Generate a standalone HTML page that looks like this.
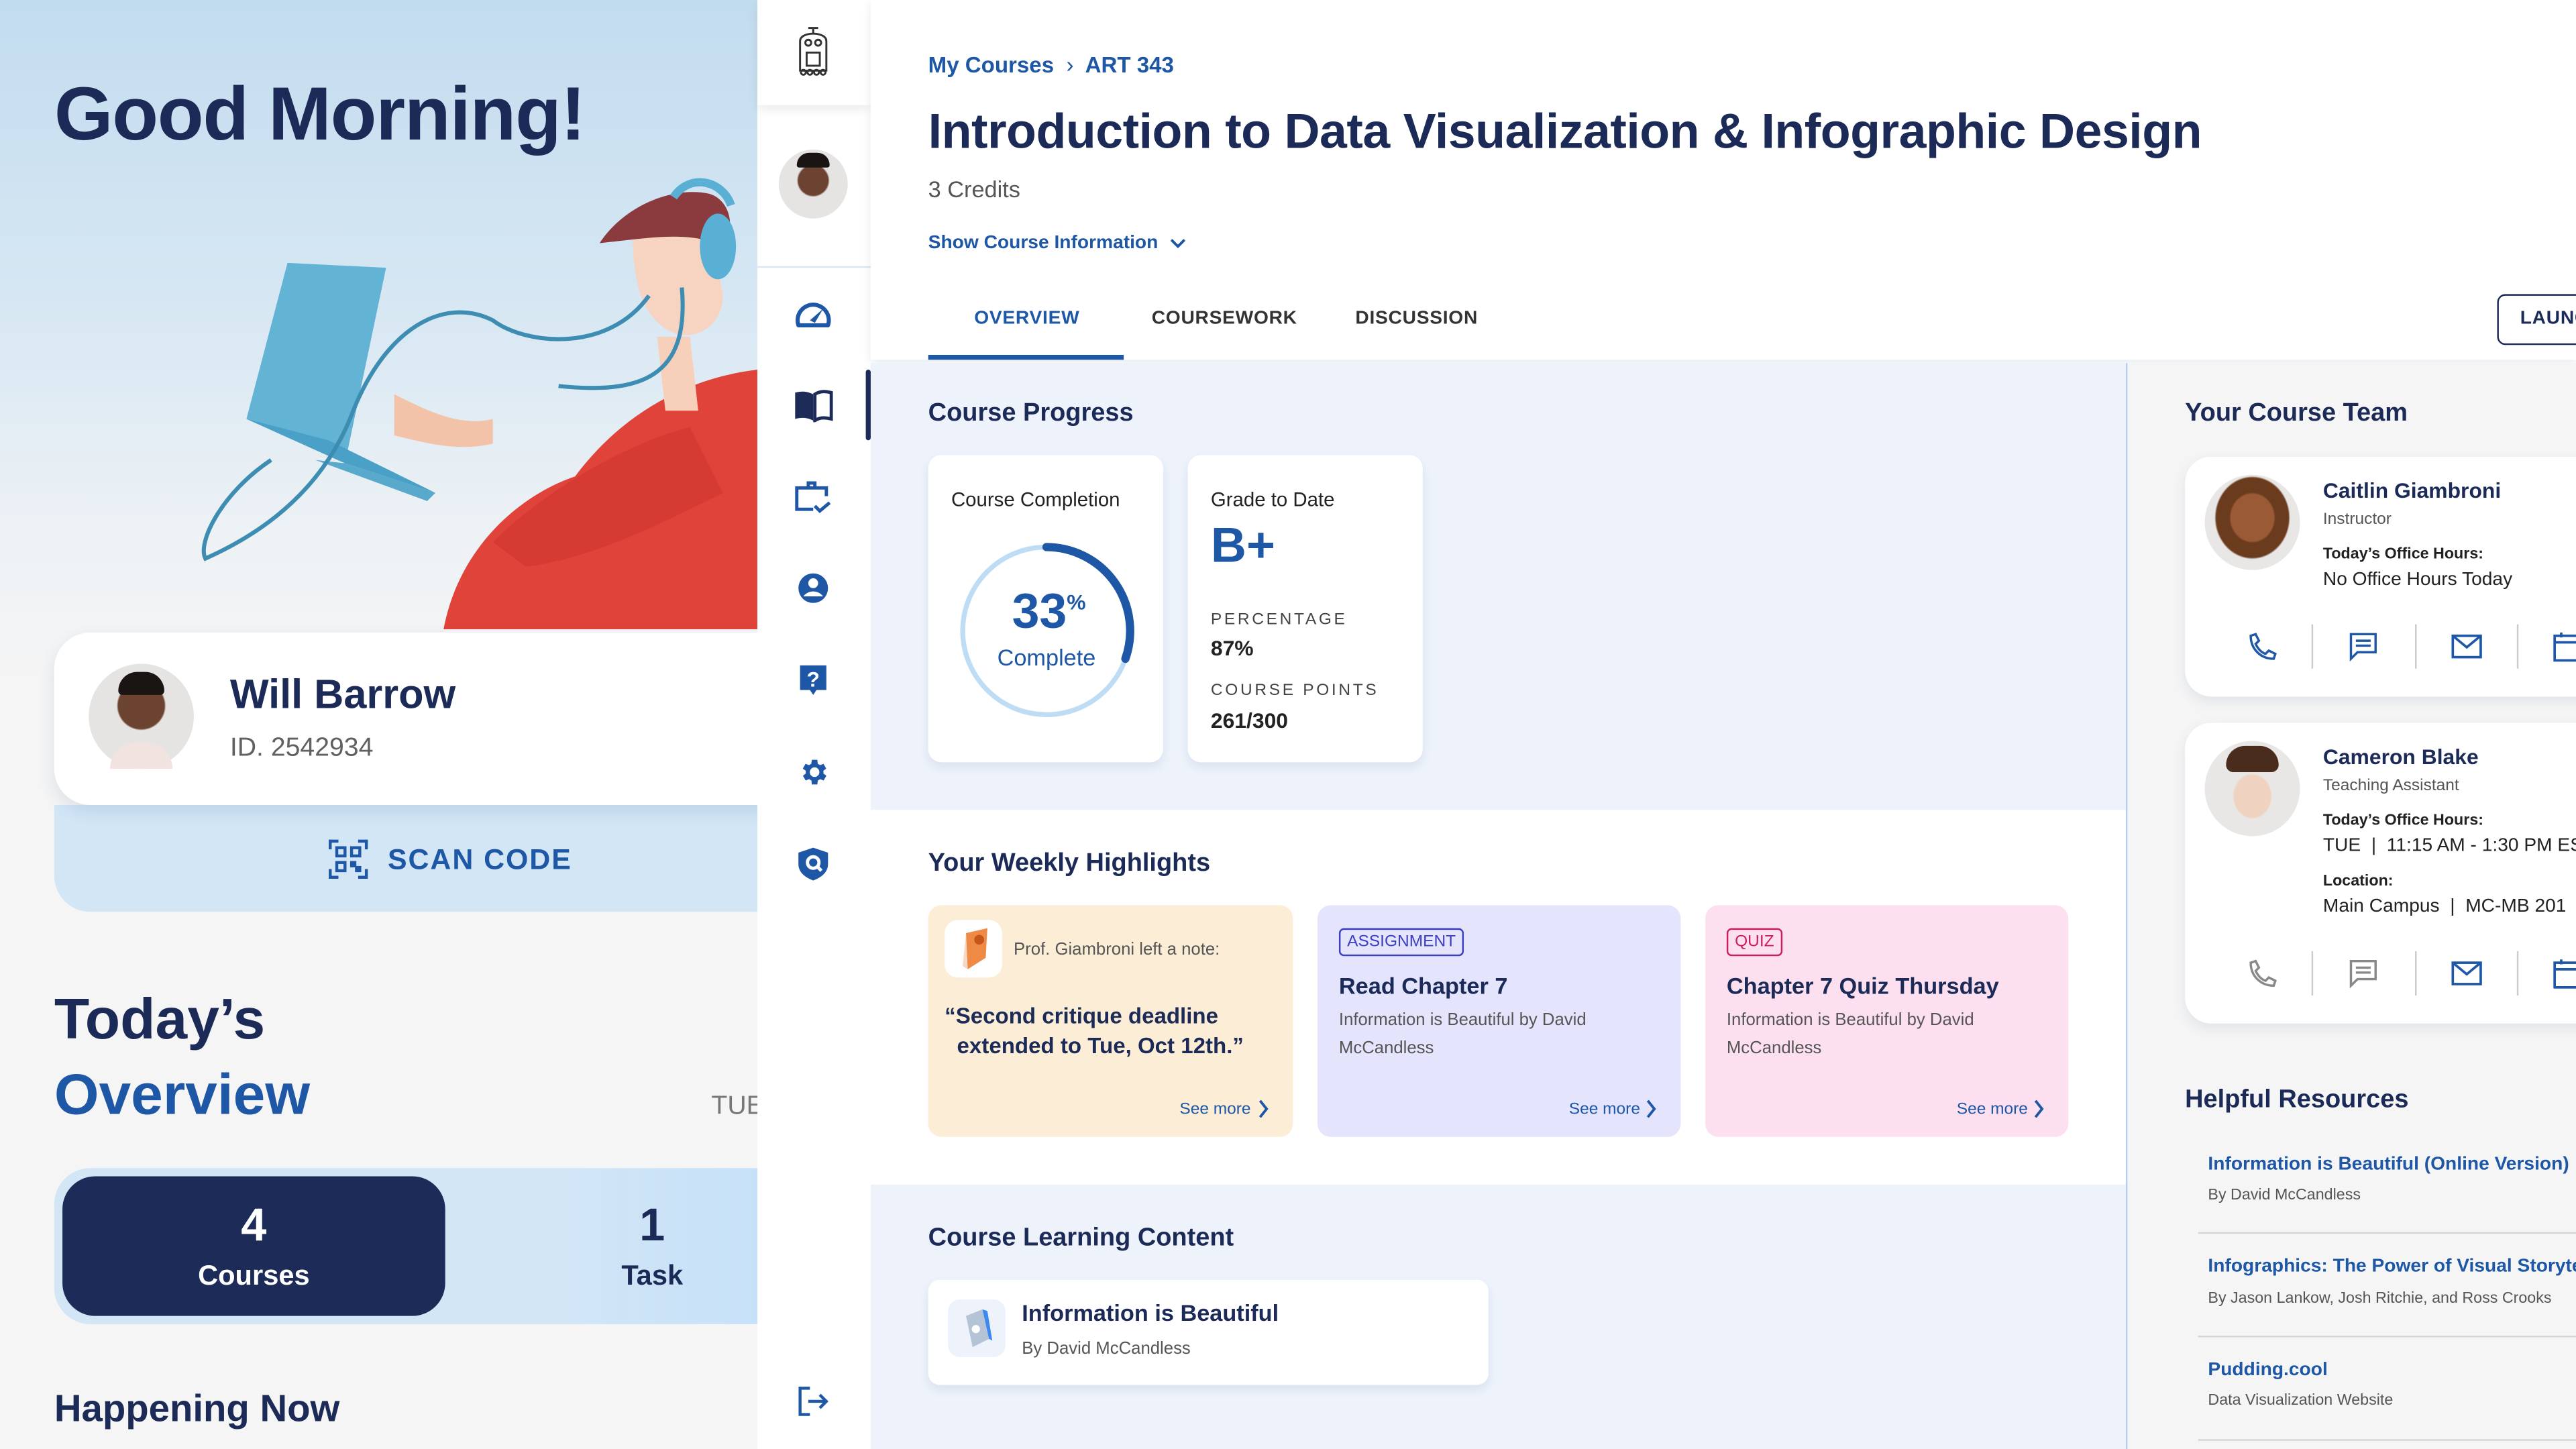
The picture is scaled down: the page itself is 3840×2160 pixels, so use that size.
<!DOCTYPE html>
<html><head><meta charset="utf-8">
<style>
html,body{margin:0;padding:0;width:3840px;height:2160px;overflow:hidden;background:#fff}
#s{position:absolute;left:0;top:0;width:1568px;height:882px;transform:scale(2.44898);transform-origin:0 0;font-family:"Liberation Sans",Arial,sans-serif;overflow:hidden}
.a{position:absolute;white-space:nowrap}
.b{font-weight:bold}
.dk{color:#1b2a57}
.bl{color:#1d57a5}
.gr{color:#555}
</style></head><body><div id="s">

<!-- LEFT PANEL -->
<div class="a" style="left:0;top:0;width:461px;height:882px;background:linear-gradient(180deg,#c2dcef 0%,#d6e7f3 180px,#eef2f5 330px,#f5f5f5 420px,#f5f5f5 100%)"></div>
<div class="a b dk" style="left:33px;top:42px;font-size:46px;letter-spacing:-0.5px">Good Morning!</div>
<!-- illustration -->
<svg class="a" style="left:110px;top:100px" width="351" height="284" viewBox="110 100 351 284">
 <path d="M270 383 C280 330 320 300 350 290 C380 250 420 230 461 225 L461 383 Z" fill="#e0433a"/>
 <path d="M300 330 C330 300 380 270 420 260 L440 300 C400 320 360 340 320 345 Z" fill="#d53a33"/>
 <path d="M240 240 C260 250 280 260 300 255 L300 270 C280 275 260 270 240 265 Z" fill="#f2c3a8"/>
 <path d="M400 205 L420 205 L425 250 L405 250 Z" fill="#f7d0bb"/>
 <path d="M385 140 C385 125 410 115 430 120 L440 180 C440 200 420 210 405 200 C390 190 385 170 385 140 Z" fill="#f7d4c2"/>
 <path d="M365 148 C380 125 410 113 432 118 C445 122 448 140 440 150 C420 140 395 145 365 148 Z" fill="#8b3b3e"/>
 <ellipse cx="437" cy="150" rx="11" ry="20" fill="#5ab0d4"/>
 <path d="M410 120 C420 105 440 110 445 125" stroke="#5ab0d4" stroke-width="5" fill="none"/>
 <path d="M175 160 L235 163 L210 282 L150 255 Z" fill="#62b3d4"/>
 <path d="M150 255 L210 282 L265 300 L200 268 Z" fill="#4aa0c6"/>
 <path d="M210 282 L265 300 L260 305 L192 280 Z" fill="#58a9cc"/>
 <path d="M395 180 C370 215 320 210 300 195 C270 180 235 200 215 250 C200 290 170 320 125 340 C120 330 135 300 165 280" stroke="#3d8db3" stroke-width="2.5" fill="none"/>
 <path d="M415 175 C420 230 390 240 340 235" stroke="#3d8db3" stroke-width="2.5" fill="none"/>
</svg>
<!-- profile card -->
<div class="a" style="left:33px;top:490px;width:440px;height:65px;background:#d2e6f6;border-radius:0 0 0 22px"></div>
<div class="a" style="left:33px;top:385px;width:440px;height:105px;background:#fff;border-radius:22px 0 0 22px;box-shadow:0 4px 10px rgba(40,80,140,0.12)"></div>
<div class="a" style="left:54px;top:404px;width:64px;height:64px;border-radius:50%;background:radial-gradient(circle at 50% 40%,#6b4330 0 14px,#e6e3e3 15px)"></div>
<div class="a" style="left:72px;top:409px;width:28px;height:14px;border-radius:14px 14px 3px 3px;background:#1a1412"></div>
<div class="a" style="left:67px;top:452px;width:38px;height:16px;border-radius:18px 18px 0 0;background:#f1e4e0"></div>
<div class="a b dk" style="left:140px;top:409px;font-size:25px">Will Barrow</div>
<div class="a" style="left:140px;top:447px;font-size:16px;color:#606060">ID. 2542934</div>
<svg class="a" style="left:200px;top:511px" width="24" height="24" viewBox="0 0 24 24" fill="none" stroke="#1d57a5" stroke-width="1.8"><path d="M1 6V1h5M18 1h5v5M23 18v5h-5M6 23H1v-5"/><rect x="5" y="5" width="5" height="5"/><rect x="14" y="5" width="5" height="5"/><rect x="5" y="14" width="5" height="5"/><path d="M14 14h2v2h-2zM17 17h2v2h-2z" fill="#1d57a5"/></svg>
<div class="a b bl" style="left:236px;top:513px;font-size:17.5px;letter-spacing:0.8px">SCAN CODE</div>
<!-- today's overview -->
<div class="a b dk" style="left:33px;top:601px;font-size:35px">Today’s</div>
<div class="a b bl" style="left:33px;top:647px;font-size:35px">Overview</div>
<div class="a" style="left:433px;top:665px;font-size:16px;color:#777">TUE</div>
<div class="a" style="left:33px;top:711px;width:440px;height:95px;background:linear-gradient(90deg,#d2e6f6 70%,#c5e0f8);border-radius:22px 0 0 22px"></div>
<div class="a" style="left:38px;top:716px;width:233px;height:85px;background:#1c2b58;border-radius:20px"></div>
<div class="a b" style="left:38px;top:730px;width:233px;text-align:center;font-size:28px;color:#fff">4</div>
<div class="a b" style="left:38px;top:767px;width:233px;text-align:center;font-size:17px;color:#fff">Courses</div>
<div class="a b dk" style="left:347px;top:730px;width:100px;text-align:center;font-size:28px">1</div>
<div class="a b dk" style="left:347px;top:767px;width:100px;text-align:center;font-size:17px">Task</div>
<div class="a b dk" style="left:33px;top:844px;font-size:23px">Happening Now</div>

<!-- SIDEBAR -->
<div class="a" style="left:461px;top:0;width:69px;height:882px;background:#fff"></div>
<div class="a" style="left:461px;top:0;width:69px;height:64px;background:#fff;box-shadow:0 3px 6px rgba(0,0,0,0.08)"></div>
<svg class="a" style="left:484px;top:13px" width="22" height="34" viewBox="0 0 22 34" fill="none" stroke="#333" stroke-width="1.2"><path d="M3 12C3 6 19 6 19 12V30H3Z"/><circle cx="8" cy="13" r="1.8"/><circle cx="14" cy="13" r="1.8"/><path d="M8 4h6M11 4v3"/><rect x="7" y="19" width="8" height="8"/><circle cx="5" cy="31" r="1.5"/><circle cx="9" cy="31" r="1.5"/><circle cx="13" cy="31" r="1.5"/><circle cx="17" cy="31" r="1.5"/></svg>
<div class="a" style="left:474px;top:91px;width:42px;height:42px;border-radius:50%;background:radial-gradient(circle at 50% 45%,#6b4330 0 9px,#e6e3e3 10px)"></div>
<div class="a" style="left:485px;top:93px;width:20px;height:9px;border-radius:10px 10px 2px 2px;background:#1a1412"></div>
<div class="a" style="left:461px;top:162px;width:69px;height:1px;background:#dbe7f3"></div>
<div class="a" style="left:527px;top:225px;width:3px;height:43px;background:#1c2b58;border-radius:2px"></div>
<svg class="a" style="left:483px;top:181px" width="24" height="20" viewBox="0 0 24 20"><path d="M3 17A9.5 9.5 0 1 1 21 17Z" fill="none" stroke="#1d57a5" stroke-width="2.5" stroke-linejoin="round"/><path d="M10 14L18 7L13 15.5Z" fill="#1d57a5"/></svg>
<svg class="a" style="left:483px;top:237px" width="24" height="20" viewBox="0 0 24 20"><path d="M1 2c4-1 7-1 11 1v16c-4-2-7-2-11-1Z" fill="#1c2b58"/><path d="M13 3c3-2 6-2 10-1v16c-4-1-7-1-10 1Z" fill="none" stroke="#1c2b58" stroke-width="2"/></svg>
<svg class="a" style="left:483px;top:292px" width="24" height="22" viewBox="0 0 24 22" fill="none" stroke="#1d57a5" stroke-width="2"><path d="M12 18H2V5h18v5M9 5V2h4v3"/><path d="M13 16l3 3 6-5"/></svg>
<svg class="a" style="left:485px;top:348px" width="20" height="20" viewBox="0 0 20 20"><circle cx="10" cy="10" r="9" fill="#1d57a5"/><circle cx="10" cy="7" r="3" fill="#fff"/><path d="M4 15c3-4 9-4 12 0" fill="#fff"/></svg>
<svg class="a" style="left:485px;top:403px" width="20" height="22" viewBox="0 0 20 22"><path d="M2 2h16v15h-6l-2 3-2-3H2Z" fill="#1d57a5"/><text x="10" y="15" font-family="Liberation Sans" font-weight="bold" font-size="13" fill="#fff" text-anchor="middle">?</text></svg>
<svg class="a" style="left:485px;top:460px" width="20" height="20" viewBox="0 0 24 24"><path fill="#1d57a5" d="M19.4 13a7.5 7.5 0 0 0 0-2l2.1-1.6-2-3.5-2.5 1a7 7 0 0 0-1.7-1L15 3h-4l-.4 2.9a7 7 0 0 0-1.7 1l-2.5-1-2 3.5L6.6 11a7.5 7.5 0 0 0 0 2l-2.1 1.6 2 3.5 2.5-1a7 7 0 0 0 1.7 1L11 21h4l.4-2.9a7 7 0 0 0 1.7-1l2.5 1 2-3.5ZM13 15.5a3.5 3.5 0 1 1 0-7 3.5 3.5 0 0 1 0 7Z"/></svg>
<svg class="a" style="left:485px;top:515px" width="20" height="22" viewBox="0 0 20 22"><path d="M10 1L19 4V11C19 16 15 19 10 21C5 19 1 16 1 11V4Z" fill="#1d57a5"/><circle cx="10" cy="10" r="3.5" fill="none" stroke="#fff" stroke-width="2"/><path d="M12.5 12.5L15 15" stroke="#fff" stroke-width="2"/></svg>
<svg class="a" style="left:485px;top:843px" width="20" height="20" viewBox="0 0 20 20" fill="none" stroke="#1d57a5" stroke-width="1.8"><path d="M8 2H2v16h6M7 10h11M14 6l4 4-4 4"/></svg>

<!-- MAIN HEADER -->
<div class="a" style="left:530px;top:0;width:1038px;height:219px;background:#fff;box-shadow:0 2px 5px rgba(40,80,140,0.12)"></div>
<div class="a b bl" style="left:565px;top:32px;font-size:13.5px">My Courses &nbsp;<span style="font-weight:normal">›</span>&nbsp; ART 343</div>
<div class="a b dk" style="left:565px;top:64px;font-size:30px;letter-spacing:-0.2px">Introduction to Data Visualization &amp; Infographic Design</div>
<div class="a" style="left:565px;top:107px;font-size:14px;color:#555">3 Credits</div>
<div class="a b bl" style="left:565px;top:142px;font-size:11.5px">Show Course Information</div>
<svg class="a" style="left:711px;top:143px" width="12" height="10" viewBox="0 0 12 10"><path d="M2 3l4 4 4-4" stroke="#1d57a5" stroke-width="1.6" fill="none"/></svg>
<div class="a b bl" style="left:593px;top:188px;font-size:11.5px;letter-spacing:0.3px">OVERVIEW</div>
<div class="a b" style="left:701px;top:188px;font-size:11.5px;letter-spacing:0.3px;color:#333">COURSEWORK</div>
<div class="a b" style="left:825px;top:188px;font-size:11.5px;letter-spacing:0.3px;color:#333">DISCUSSION</div>
<div class="a" style="left:565px;top:216px;width:119px;height:3px;background:#1d57a5"></div>
<div class="a" style="left:1520px;top:179px;width:60px;height:29px;border:1.5px solid #1c2b58;border-radius:5px;background:#fff"></div>
<div class="a b dk" style="left:1534px;top:188px;font-size:11.5px;letter-spacing:0.3px">LAUNCH</div>

<!-- CONTENT LEFT -->
<div class="a" style="left:530px;top:221px;width:765px;height:272px;background:#eef3fb"></div>
<div class="a" style="left:530px;top:493px;width:765px;height:228px;background:#fff"></div>
<div class="a" style="left:530px;top:721px;width:765px;height:161px;background:#eef3fb"></div>
<div class="a" style="left:1294px;top:221px;width:1px;height:661px;background:#b9cdf0"></div>
<div class="a" style="left:1295px;top:221px;width:273px;height:661px;background:#f5f5f5"></div>

<div class="a b dk" style="left:565px;top:243px;font-size:15.5px">Course Progress</div>
<div class="a" style="left:565px;top:277px;width:143px;height:187px;background:#fff;border-radius:8px;box-shadow:0 3px 6px rgba(40,80,140,0.1)"></div>
<div class="a" style="left:723px;top:277px;width:143px;height:187px;background:#fff;border-radius:8px;box-shadow:0 3px 6px rgba(40,80,140,0.1)"></div>
<div class="a" style="left:579px;top:297px;font-size:12px;color:#222">Course Completion</div>
<svg class="a" style="left:581px;top:328px" width="112" height="112" viewBox="0 0 112 112"><circle cx="56" cy="56" r="51" fill="none" stroke="#bfdcf5" stroke-width="3"/><path d="M56 5 A51 51 0 0 1 104 73" fill="none" stroke="#1d57a5" stroke-width="5" stroke-linecap="round"/></svg>
<div class="a b bl" style="left:616px;top:356px;font-size:30px">33<span style="font-size:13px;vertical-align:top;position:relative;top:3px">%</span></div>
<div class="a bl" style="left:581px;top:392px;width:112px;text-align:center;font-size:14px">Complete</div>
<div class="a" style="left:737px;top:297px;font-size:12px;color:#222">Grade to Date</div>
<div class="a b bl" style="left:737px;top:316px;font-size:30px">B+</div>
<div class="a" style="left:737px;top:372px;font-size:10px;color:#444;letter-spacing:1.5px">PERCENTAGE</div>
<div class="a b" style="left:737px;top:387px;font-size:13px;color:#222">87%</div>
<div class="a" style="left:737px;top:415px;font-size:10px;color:#444;letter-spacing:1.5px">COURSE POINTS</div>
<div class="a b" style="left:737px;top:431px;font-size:13px;color:#222">261/300</div>

<div class="a b dk" style="left:565px;top:517px;font-size:15.5px">Your Weekly Highlights</div>
<div class="a" style="left:565px;top:551px;width:222px;height:141px;background:#fcedd6;border-radius:8px"></div>
<div class="a" style="left:802px;top:551px;width:221px;height:141px;background:#e4e4fd;border-radius:8px"></div>
<div class="a" style="left:1038px;top:551px;width:221px;height:141px;background:#fde0ef;border-radius:8px"></div>
<div class="a" style="left:575px;top:560px;width:35px;height:35px;background:#fff;border-radius:8px"></div>
<svg class="a" style="left:583px;top:563px" width="20" height="28" viewBox="0 0 20 28"><path d="M5 5L18 2L17 20L6 27Z" fill="#ef8a45"/><path d="M5 5L3 25L6 27Z" fill="#f8d8c4"/><circle cx="13" cy="9" r="3" fill="#c5561c"/></svg>
<div class="a" style="left:617px;top:572px;font-size:10.5px;color:#555">Prof. Giambroni left a note:</div>
<div class="a b dk" style="left:575px;top:610px;font-size:13.5px;line-height:18px">“Second critique deadline<br>&nbsp;&nbsp;extended to Tue, Oct 12th.”</div>
<div class="a bl" style="left:718px;top:670px;font-size:10px">See more</div>
<svg class="a" style="left:765px;top:669px" width="8" height="12" viewBox="0 0 8 12"><path d="M2 1l4 5-4 5" stroke="#1d57a5" stroke-width="1.6" fill="none"/></svg>

<div class="a" style="left:815px;top:565px;border:1px solid #3b3fc0;border-radius:3px;padding:1px 4px;font-size:10px;color:#3b3fc0;line-height:13px">ASSIGNMENT</div>
<div class="a b dk" style="left:815px;top:592px;font-size:14px">Read Chapter 7</div>
<div class="a" style="left:815px;top:613px;font-size:10.5px;color:#555;line-height:17px">Information is Beautiful by David<br>McCandless</div>
<div class="a bl" style="left:955px;top:670px;font-size:10px">See more</div>
<svg class="a" style="left:1001px;top:669px" width="8" height="12" viewBox="0 0 8 12"><path d="M2 1l4 5-4 5" stroke="#1d57a5" stroke-width="1.6" fill="none"/></svg>

<div class="a" style="left:1051px;top:565px;border:1px solid #cc1f5a;border-radius:3px;padding:1px 4px;font-size:10px;color:#cc1f5a;line-height:13px">QUIZ</div>
<div class="a b dk" style="left:1051px;top:592px;font-size:14px">Chapter 7 Quiz Thursday</div>
<div class="a" style="left:1051px;top:613px;font-size:10.5px;color:#555;line-height:17px">Information is Beautiful by David<br>McCandless</div>
<div class="a bl" style="left:1191px;top:670px;font-size:10px">See more</div>
<svg class="a" style="left:1237px;top:669px" width="8" height="12" viewBox="0 0 8 12"><path d="M2 1l4 5-4 5" stroke="#1d57a5" stroke-width="1.6" fill="none"/></svg>

<div class="a b dk" style="left:565px;top:745px;font-size:15.5px">Course Learning Content</div>
<div class="a" style="left:565px;top:779px;width:341px;height:64px;background:#fff;border-radius:7px;box-shadow:0 3px 6px rgba(40,80,140,0.1)"></div>
<div class="a" style="left:577px;top:791px;width:35px;height:35px;background:#eef3fb;border-radius:7px"></div>
<svg class="a" style="left:584px;top:795px" width="22" height="28" viewBox="0 0 22 28"><path d="M4 6L14 2L18 20L8 25Z" fill="#b5c3d6"/><path d="M14 2L17 3L20 21L18 20Z" fill="#3c8af0"/><circle cx="10" cy="14" r="2.5" fill="#fff"/></svg>
<div class="a b dk" style="left:622px;top:791px;font-size:14px">Information is Beautiful</div>
<div class="a" style="left:622px;top:815px;font-size:10.5px;color:#555">By David McCandless</div>

<!-- RIGHT COLUMN -->
<div class="a b dk" style="left:1330px;top:243px;font-size:15.5px">Your Course Team</div>
<div class="a" style="left:1330px;top:278px;width:260px;height:146px;background:#fff;border-radius:16px;box-shadow:0 3px 8px rgba(40,80,140,0.1)"></div>
<div class="a" style="left:1330px;top:440px;width:260px;height:183px;background:#fff;border-radius:16px;box-shadow:0 3px 8px rgba(40,80,140,0.1)"></div>
<div class="a" style="left:1342px;top:289px;width:58px;height:58px;border-radius:50%;background:radial-gradient(ellipse at 50% 45%,#9a5a36 0 13px,#6b3b1e 14px 22px,#e9e7e6 23px)"></div>
<div class="a b dk" style="left:1414px;top:291px;font-size:13px">Caitlin Giambroni</div>
<div class="a" style="left:1414px;top:311px;font-size:10px;color:#555">Instructor</div>
<div class="a b" style="left:1414px;top:332px;font-size:9.5px;color:#222">Today’s Office Hours:</div>
<div class="a" style="left:1414px;top:347px;font-size:11.5px;color:#222">No Office Hours Today</div>

<div class="a" style="left:1342px;top:451px;width:58px;height:58px;border-radius:50%;background:radial-gradient(ellipse at 50% 58%,#f0d2c0 0 11px,#e9e7e6 12px)"></div>
<div class="a" style="left:1355px;top:454px;width:32px;height:16px;border-radius:16px 16px 6px 6px;background:#4a2c1c"></div>
<div class="a b dk" style="left:1414px;top:453px;font-size:13px">Cameron Blake</div>
<div class="a" style="left:1414px;top:473px;font-size:10px;color:#555">Teaching Assistant</div>
<div class="a b" style="left:1414px;top:494px;font-size:9.5px;color:#222">Today’s Office Hours:</div>
<div class="a" style="left:1414px;top:509px;font-size:11.5px;color:#222">TUE &nbsp;| &nbsp;11:15 AM - 1:30 PM EST</div>
<div class="a b" style="left:1414px;top:531px;font-size:9.5px;color:#222">Location:</div>
<div class="a" style="left:1414px;top:546px;font-size:11.5px;color:#222">Main Campus &nbsp;| &nbsp;MC-MB 201</div>

<div class="a" style="left:1407px;top:380px;width:1px;height:27px;background:#ccc"></div>
<div class="a" style="left:1470px;top:380px;width:1px;height:27px;background:#ccc"></div>
<div class="a" style="left:1532px;top:380px;width:1px;height:27px;background:#ccc"></div>
<svg class="a" style="left:1368px;top:385px" width="18" height="18" viewBox="0 0 18 18"><path d="M2 2c0 8 6 14 14 14l1-3-4-2-2 2c-3-1-5-4-6-6l2-2-2-4Z" fill="none" stroke="#1d57a5" stroke-width="1.4"/></svg>
<svg class="a" style="left:1429px;top:384px" width="19" height="19" viewBox="0 0 19 19" fill="none" stroke="#1d57a5" stroke-width="1.4"><path d="M2 2h15v11H6l-4 4Z"/><path d="M5 6h9M5 9h9"/></svg>
<svg class="a" style="left:1492px;top:386px" width="19" height="15" viewBox="0 0 19 15" fill="none" stroke="#1d57a5" stroke-width="1.5"><rect x="1" y="1" width="17" height="13"/><path d="M1 1l8.5 7L18 1"/></svg>
<svg class="a" style="left:1554px;top:384px" width="20" height="19" viewBox="0 0 20 19" fill="none" stroke="#1d57a5" stroke-width="1.5"><rect x="1" y="3" width="20" height="15"/><path d="M1 7h20M5 1v3"/></svg>
<div class="a" style="left:1407px;top:579px;width:1px;height:27px;background:#ccc"></div>
<div class="a" style="left:1470px;top:579px;width:1px;height:27px;background:#ccc"></div>
<div class="a" style="left:1532px;top:579px;width:1px;height:27px;background:#ccc"></div>
<svg class="a" style="left:1368px;top:584px" width="18" height="18" viewBox="0 0 18 18"><path d="M2 2c0 8 6 14 14 14l1-3-4-2-2 2c-3-1-5-4-6-6l2-2-2-4Z" fill="none" stroke="#888" stroke-width="1.4"/></svg>
<svg class="a" style="left:1429px;top:583px" width="19" height="19" viewBox="0 0 19 19" fill="none" stroke="#888" stroke-width="1.4"><path d="M2 2h15v11H6l-4 4Z"/><path d="M5 6h9M5 9h9"/></svg>
<svg class="a" style="left:1492px;top:585px" width="19" height="15" viewBox="0 0 19 15" fill="none" stroke="#1d57a5" stroke-width="1.5"><rect x="1" y="1" width="17" height="13"/><path d="M1 1l8.5 7L18 1"/></svg>
<svg class="a" style="left:1554px;top:583px" width="20" height="19" viewBox="0 0 20 19" fill="none" stroke="#1d57a5" stroke-width="1.5"><rect x="1" y="3" width="20" height="15"/><path d="M1 7h20M5 1v3"/></svg>

<div class="a b dk" style="left:1330px;top:661px;font-size:15.5px">Helpful Resources</div>
<div class="a b bl" style="left:1344px;top:703px;font-size:11.5px">Information is Beautiful (Online Version)</div>
<div class="a" style="left:1344px;top:722px;font-size:9.5px;color:#555">By David McCandless</div>
<div class="a" style="left:1338px;top:750px;width:240px;height:1px;background:#d5d5d5"></div>
<div class="a b bl" style="left:1344px;top:765px;font-size:11.5px">Infographics: The Power of Visual Storytelling</div>
<div class="a" style="left:1344px;top:785px;font-size:9.5px;color:#555">By Jason Lankow, Josh Ritchie, and Ross Crooks</div>
<div class="a" style="left:1338px;top:813px;width:240px;height:1px;background:#d5d5d5"></div>
<div class="a b bl" style="left:1344px;top:828px;font-size:11.5px">Pudding.cool</div>
<div class="a" style="left:1344px;top:847px;font-size:9.5px;color:#555">Data Visualization Website</div>
<div class="a" style="left:1338px;top:876px;width:240px;height:1px;background:#d5d5d5"></div>

</div></body></html>
